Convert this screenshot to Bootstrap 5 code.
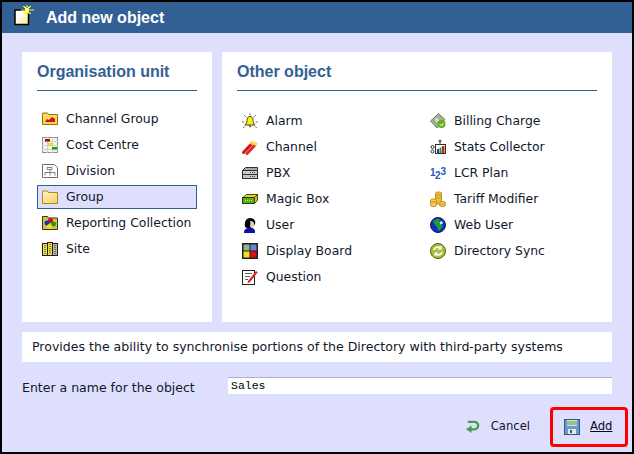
<!DOCTYPE html>
<html>
  <head>
    <title>Add new object</title>
    <link
      rel="stylesheet"
      href="https://cdn.jsdelivr.net/npm/bootstrap@5.3.3/dist/css/bootstrap.min.css"
    />
    <script src="https://cdn.jsdelivr.net/npm/bootstrap@5.3.3/dist/js/bootstrap.bundle.min.js"></script>
    <style>
      html, body { margin: 0; background: #dedffd; overflow: hidden; }
      body { font-family: "DejaVu Sans", sans-serif; font-size: 12.5px; color: #10182c; }
      .dlg { width: 634px; height: 454px; background: #dedffd; border: 2px solid #000; }
      .dlg-head { height: 31px; background: #336094; color: #fff; font: bold 16px "Liberation Sans", sans-serif; padding-left: 10px; gap: 8px; }
      .dlg-body { padding: 19px 20px 0 20px; }
      .pane { background: #fff; height: 270px; }
      .pane-left { width: 190px; padding: 10px 15px 0 15px; margin-right: 10px; }
      .pane-right { width: 390px; padding: 10px 15px 0 15px; }
      .pane-title { font: bold 16px "Liberation Sans", sans-serif; color: #336094; border-bottom: 1px solid #336094; height: 29px; margin: 0 0 15px 0; line-height: 19px; }
      .pane-right .pane-title { margin-bottom: 17px; }
      .item { height: 26px; padding-left: 5px; gap: 8px; font-size: 12.4px; }
      .item.sel { background: #dedffd; border: 1px solid #336094; padding-left: 4px; height: 24px; margin-top: 1px; margin-bottom: 1px; }
      .item svg { width: 16px; height: 16px; flex: none; }
      .obj-col { width: 188px; flex: none; }
      .desc { background: #fff; height: 30px; padding-left: 10px; margin-top: 10px; font-size: 12.55px; }
      .name-row { margin-top: 15px; height: 17px; }
      .name-label { width: 206px; padding-top: 2px; }
      .name-input { width: 384px; height: 17px; border: 0; border-top: 1px solid #b0b0c8; background: #fff; font: 11.5px "Liberation Mono", monospace; padding: 0 3px 2px 3px; color: #000; outline: 0; }
      .foot { margin-top: 13px; height: 40px; margin-right: -16px; font-size: 11.6px; }
      .cancel { gap: 11px; margin-right: 20px; }
      .cancel svg { width: 15px; height: 15px; }
      .add-box { width: 78px; height: 40px; border: 3px solid #f00; border-radius: 4px; gap: 10px; padding-left: 11px; }
      .add-box a { color: #0a0a1c; }
      .add-box svg { width: 16px; height: 16px; }
      .num-glyph { font: bold 10px "Liberation Sans", sans-serif; fill: #2858c0; }
    </style>
  </head>
  <body>
    <div class="dlg">
      <div class="dlg-head d-flex align-items-center">
        <svg width="26" height="25" viewBox="0 0 26 25">
          <defs>
            <linearGradient id="pageFill" x1="0" y1="0" x2="1" y2="1">
              <stop offset=".35" stop-color="#ffffff" />
              <stop offset="1" stop-color="#f8ee70" />
            </linearGradient>
            <linearGradient id="groupFill" x1="0" y1="0" x2="1" y2="1">
              <stop offset="0" stop-color="#fff4c0" />
              <stop offset="1" stop-color="#f4cf70" />
            </linearGradient>
          </defs>
          <rect x="3" y="5" width="13.500" height="14.500" fill="url(#pageFill)" stroke="#000" stroke-width="1.500" />
          <path d="M15 0v11M9 5h13M11 1l8 8M19 1l-8 8M12.500 1l5 8M17.500 1l-5 8" stroke="#ffff30" />
          <circle cx="15" cy="5" r="2" fill="#ffffa0" />
        </svg>
        <span>Add new object</span>
      </div>
      <div class="dlg-body">
        <div class="d-flex">
          <div class="pane pane-left">
            <h2 class="pane-title">Organisation unit</h2>
            <div class="item d-flex align-items-center">
              <svg viewBox="0 0 16 16"><path d="M.5 3.500V2h5l1 1.500h9v10H.5z" fill="#f6d860" stroke="#907800"/><path d="M3 11l2-3 2 1 3-3 3 2v3z" fill="#d81010"/><path d="M6 7l1-1 1 1M11 5l1-1 1 1" stroke="#f8f080" fill="none"/></svg>
              <span>Channel Group</span>
            </div>
            <div class="item d-flex align-items-center">
              <svg viewBox="0 0 16 16"><rect x=".5" y=".5" width="15" height="15" fill="#f4f4f0" stroke="#909090"/><path d="M0 4.500h16M0 8.500h16M0 12.500h16M5.500 0v16M10.500 0v16" stroke="#d0d0d0"/><rect x="3" y="2" width="5" height="2.500" fill="#b80000"/><rect x="6" y="6" width="5" height="2.500" fill="#f0e000"/><rect x="10" y="10" width="5" height="2.500" fill="#00b000"/></svg>
              <span>Cost Centre</span>
            </div>
            <div class="item d-flex align-items-center">
              <svg viewBox="0 0 16 16"><path d="M.5 1.500h12l3 3v10H.5z" fill="#fff" stroke="#707070"/><path d="M5 4.500h5v2H5zM8 6.500v3M3 9.500h10M3 9.500v3M8 9.500v3M13 9.500v3" stroke="#808080" fill="none"/></svg>
              <span>Division</span>
            </div>
            <div class="item sel d-flex align-items-center">
              <svg viewBox="0 0 16 16"><path d="M.5 3.500V2h5l1 1.500h9v11H.5z" fill="url(#groupFill)" stroke="#a89000"/></svg>
              <span>Group</span>
            </div>
            <div class="item d-flex align-items-center">
              <svg viewBox="0 0 16 16"><path d="M.5 3V1.500h5l1 1.500h9v11.500H.5z" fill="#d8c050" stroke="#403400"/><circle cx="8.500" cy="5.500" r="2.500" fill="#d01010"/><circle cx="5" cy="8" r="2.500" fill="#1030c0"/><circle cx="11.500" cy="9" r="2.500" fill="#10a020"/><circle cx="7.500" cy="11.500" r="2.500" fill="#f0e020"/></svg>
              <span>Reporting Collection</span>
            </div>
            <div class="item d-flex align-items-center">
              <svg viewBox="0 0 16 16"><rect x=".5" y="2.500" width="5" height="12" fill="#f0e040" stroke="#202020"/><rect x="5.500" y="1.500" width="5" height="13" fill="#e8d850" stroke="#202020"/><rect x="10.500" y="2.500" width="5" height="12" fill="#b8b8a0" stroke="#202020"/><path d="M3 4v9M8 3v10M13 4v9" stroke="#303030" stroke-dasharray="1 1"/></svg>
              <span>Site</span>
            </div>
          </div>
          <div class="pane pane-right">
            <h2 class="pane-title">Other object</h2>
            <div class="d-flex">
              <div class="obj-col">
                <div class="item d-flex align-items-center">
                  <svg viewBox="0 0 16 16"><path d="M8 3.500c-2 0-3 1.500-3 4s-1 3-2 4.500h10c-1-1.500-2-2-2-4.500s-1-4-3-4z" fill="#f8f020" stroke="#505000"/><path d="M6.500 12.500h3l-1.500 2z" fill="#404000"/><path d="M8 0v2.500M2 2l2.500 2.500M14 2l-2.500 2.500M0 9h2.500M13.500 9H16M1 15l2.500-2M15 15l-2.500-2" stroke="#808080"/></svg>
                  <span>Alarm</span>
                </div>
                <div class="item d-flex align-items-center">
                  <svg viewBox="0 0 16 16"><path d="M1.500 13.500l7.500-8" stroke="#c81818" stroke-width="3" stroke-linecap="round"/><path d="M5 14.500l7.500-8" stroke="#e02828" stroke-width="3" stroke-linecap="round"/><circle cx="10" cy="3.800" r="1.900" fill="#f8d840"/><circle cx="13.500" cy="4.800" r="1.900" fill="#f8d840"/></svg>
                  <span>Channel</span>
                </div>
                <div class="item d-flex align-items-center">
                  <svg viewBox="0 0 16 16"><path d="M3.500 2.500h12v3H.5z" fill="#a8a8a8" stroke="#303030"/><rect x=".5" y="5.500" width="15" height="4" fill="#d0d0d0" stroke="#303030"/><rect x=".5" y="9.500" width="15" height="4" fill="#c8c8c8" stroke="#303030"/><path d="M8 7.500h6M8 11.500h6" stroke="#404040" stroke-dasharray="1 1"/><path d="M2 7.500h2M2 11.500h2" stroke="#e0c000"/></svg>
                  <span>PBX</span>
                </div>
                <div class="item d-flex align-items-center">
                  <svg viewBox="0 0 16 16"><path d="M4.500 3.500h11l-3 3H1z" fill="#f0d020" stroke="#405000"/><rect x=".5" y="6.500" width="12" height="6" fill="#50b020" stroke="#204000"/><path d="M12.500 6.500l3-3v6l-3 3z" fill="#e0b820" stroke="#405000"/><path d="M3 9.500h7" stroke="#f8e820" stroke-dasharray="1 1"/></svg>
                  <span>Magic Box</span>
                </div>
                <div class="item d-flex align-items-center">
                  <svg viewBox="0 0 16 16"><path d="M2 16c0-3 1-5 6-5s5 2 5 5z" fill="#1010a8"/><path d="M3 10c-1-5 1-9 5-9s6 3 5 6l-3 4H5z" fill="#050510"/><path d="M8 4c3 0 4 1 4 3s-1 4-2 4-2-1-2-2 1-2 0-5z" fill="#f0d0b0"/></svg>
                  <span>User</span>
                </div>
                <div class="item d-flex align-items-center">
                  <svg viewBox="0 0 16 16"><rect width="16" height="16" fill="#202020"/><rect x="1.500" y="1.500" width="6" height="6" fill="#90b890"/><rect x="8.500" y="1.500" width="6" height="6" fill="#7080d0"/><rect x="1.500" y="8.500" width="6" height="6" fill="#f8e020"/><rect x="8.500" y="8.500" width="6" height="6" fill="#e01010"/></svg>
                  <span>Display Board</span>
                </div>
                <div class="item d-flex align-items-center">
                  <svg viewBox="0 0 16 16"><rect x=".5" y="1.500" width="12" height="14" fill="#fff" stroke="#202020"/><path d="M3 4.500h7M3 7.500h5M3 10.500h3" stroke="#606060"/><path d="M6 12l8-10 1.800 1.300-8 10-2.300 1z" fill="#e02020"/></svg>
                  <span>Question</span>
                </div>
              </div>
              <div class="obj-col">
                <div class="item d-flex align-items-center">
                  <svg viewBox="0 0 16 16"><path d="M.5 8l8-7.500 6.500 6-8 8.500z" fill="#a0b090" stroke="#708070"/><circle cx="7" cy="7" r="2" fill="#d8e0d0"/><circle cx="11.500" cy="11" r="4" fill="#60b020"/><path d="M9.500 11l2 2 2-3" stroke="#fff" fill="none"/></svg>
                  <span>Billing Charge</span>
                </div>
                <div class="item d-flex align-items-center">
                  <svg viewBox="0 0 16 16"><rect x="5.500" y="5.500" width="10" height="9" fill="#fff" stroke="#303030"/><rect x="7" y="10" width="2" height="4" fill="#1040c0"/><rect x="9.500" y="8.500" width="2" height="5.500" fill="#20a020"/><rect x="12" y="7" width="2.500" height="7" fill="#d02020"/><path d="M10 6V2" stroke="#303030"/><circle cx="10" cy="2" r="1.500" fill="#606060"/><circle cx="2.500" cy="8" r="1.500" fill="#fff" stroke="#303030"/><circle cx="2.500" cy="12.500" r="1.500" fill="#fff" stroke="#303030"/></svg>
                  <span>Stats Collector</span>
                </div>
                <div class="item d-flex align-items-center">
                  <svg viewBox="0 0 16 16"><text class="num-glyph" x="0" y="11">1</text><text class="num-glyph" x="5" y="14">2</text><text class="num-glyph" x="10.500" y="10">3</text></svg>
                  <span>LCR Plan</span>
                </div>
                <div class="item d-flex align-items-center">
                  <svg viewBox="0 0 16 16"><rect x="5.500" y="1" width="6" height="12" rx="2" fill="#f0c040" stroke="#c09020"/><rect x=".5" y="8" width="6" height="7.500" rx="2" fill="#f4cc50" stroke="#c09020"/><rect x="9.500" y="10.500" width="6" height="5" rx="2" fill="#f4cc50" stroke="#c09020"/><path d="M6 4h5M6 7h5M1 11h5M10 13h5" stroke="#c89828"/></svg>
                  <span>Tariff Modifier</span>
                </div>
                <div class="item d-flex align-items-center">
                  <svg viewBox="0 0 16 16"><circle cx="8" cy="8" r="7.500" fill="#1030c0" stroke="#101860"/><path d="M3 5c2-3 5-4 7-3l-1 3 4 4-4 5c-2-2-1-4-3-5z" fill="#20a030"/><path d="M9.500 5l2.500-1 1 2.500-2.500 1z" fill="#e8e8ff"/></svg>
                  <span>Web User</span>
                </div>
                <div class="item d-flex align-items-center">
                  <svg viewBox="0 0 16 16"><circle cx="8" cy="8" r="7.500" fill="#a8c040" stroke="#506000"/><path d="M4 7a4 4 0 0 1 6.500-2M12 9a4 4 0 0 1-6.500 2" stroke="#fff" stroke-width="1.500" fill="none"/><path d="M11.500 2.500v4h-4zM4.500 13.500v-4h4z" fill="#fff"/></svg>
                  <span>Directory Sync</span>
                </div>
              </div>
            </div>
          </div>
        </div>
        <div class="desc d-flex align-items-center">Provides the ability to synchronise portions of the Directory with third-party systems</div>
        <div class="name-row d-flex">
          <label class="name-label" for="objName">Enter a name for the object</label>
          <input class="name-input" id="objName" type="text" value="Sales" />
        </div>
        <div class="foot d-flex justify-content-end align-items-center">
          <div class="cancel d-flex align-items-center">
            <svg viewBox="0 0 16 16"><path d="M3 3h7a4 4 0 0 1 0 8H6" stroke="#4a9a50" stroke-width="2.500" fill="none"/><path d="M7 7v8L1 11z" fill="#4a9a50"/></svg>
            <span>Cancel</span>
          </div>
          <div class="add-box d-flex align-items-center">
            <svg viewBox="0 0 16 16"><rect x=".5" y=".5" width="15" height="15" fill="#6898d0" stroke="#305890"/><rect x="3" y="1" width="10" height="6" fill="#d0e4c8"/><path d="M3 3h10M3 5h10" stroke="#60a060"/><rect x="4" y="10" width="8" height="5" fill="#e0e8f0"/><rect x="6" y="11" width="2" height="3" fill="#305890"/></svg>
            <a href="#">Add</a>
          </div>
        </div>
      </div>
    </div>
  </body>
</html>
